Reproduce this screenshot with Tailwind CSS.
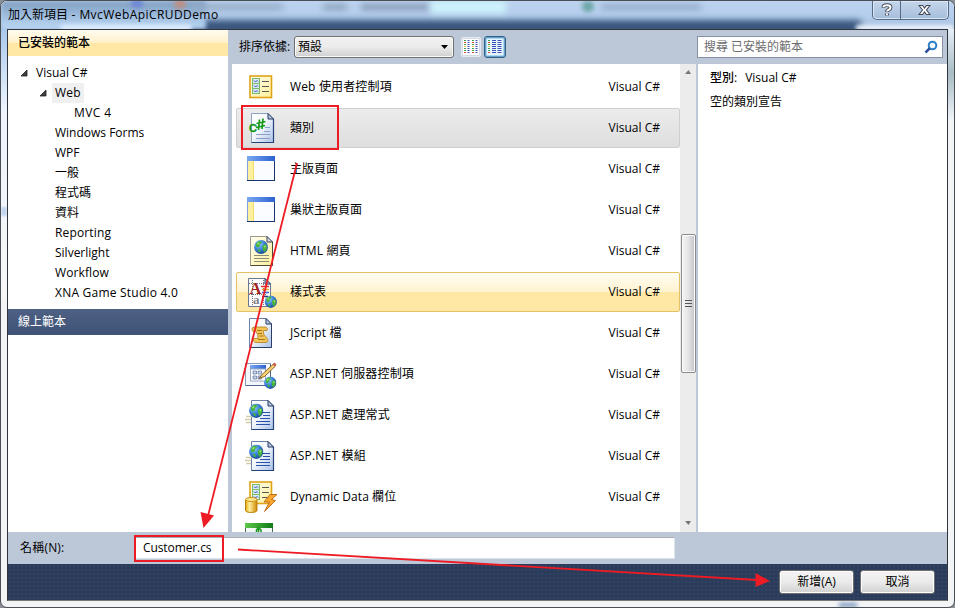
<!DOCTYPE html>
<html lang="zh-Hant">
<head>
  <meta charset="UTF-8">
  <meta name="viewport" content="width=device-width, initial-scale=1.0">
  <title>加入新項目 - MvcWebApiCRUDDemo</title>
  <script src="https://cdn.jsdelivr.net/npm/@tailwindcss/browser@4"></script>
</head>
<body class="w-[955px] h-[608px] overflow-hidden bg-[#8a8f96] font-['Open_Sans','Noto_Sans_CJK_TC',sans-serif] text-[12px] leading-[20px] text-black">

  <!-- icon sprites -->
  <svg width="0" height="0" class="absolute">
    <defs>
      <linearGradient id="paper" x1="0" y1="0" x2="1" y2="1"><stop offset="0" stop-color="#fff"/><stop offset=".45" stop-color="#f4f8fd"/><stop offset="1" stop-color="#a9bfe6"/></linearGradient>
      <linearGradient id="yellowPaper" x1="0" y1="0" x2="1" y2="1"><stop offset="0" stop-color="#fffef0"/><stop offset="1" stop-color="#ffef9a"/></linearGradient>
      <linearGradient id="blueBar" x1="0" y1="0" x2="1" y2="0"><stop offset="0" stop-color="#7aa8f2"/><stop offset="1" stop-color="#2c62d0"/></linearGradient>
      <linearGradient id="gold" x1="0" y1="0" x2="1" y2="0"><stop offset="0" stop-color="#e9a800"/><stop offset=".35" stop-color="#fff0a0"/><stop offset="1" stop-color="#d08a00"/></linearGradient>
      <linearGradient id="greenBar" x1="0" y1="0" x2="1" y2="0"><stop offset="0" stop-color="#5fc84a"/><stop offset="1" stop-color="#0f7a14"/></linearGradient>
      <radialGradient id="sea" cx=".35" cy=".3" r=".8"><stop offset="0" stop-color="#8fd0ff"/><stop offset=".5" stop-color="#3a7fd6"/><stop offset="1" stop-color="#12408f"/></radialGradient>

      <symbol id="globe" viewBox="0 0 14 14">
        <circle cx="7" cy="7" r="6.900" fill="url(#sea)"/>
        <path d="M2 3.500 4.500 1.200 8 1.500 7 3.500 5.500 4.500 6 6 4 7.500 2 6.500zM8.500 6 11 4l2 2-.5 3.500-2 2.800L8.800 10zM3.500 9 6 9.500 6.500 12 5 12z" fill="#46b43c"/>
        <path d="M3 3.500 5 2.200 5.500 3.300 3.800 5zM10 6l1.500-.8.5 1.500-1.200 1z" fill="#a8e07a"/>
      </symbol>
      <symbol id="form" viewBox="0 0 24 24">
        <rect x="1" y="1" width="21.500" height="21.500" fill="url(#yellowPaper)" stroke="#dfa416" stroke-width="1.600"/>
        <g fill="#dce8fb" stroke="#7dbb62" stroke-width="1"><rect x="3.500" y="3.500" width="7" height="5"/><rect x="3.500" y="8.500" width="7" height="5"/><rect x="3.500" y="13.500" width="7" height="5"/></g>
        <path d="M5 5.500 6.500 7 8 5.500 9 6.500M5 10.500 6.500 12 8 10.500 9 11.500M5 15.500 6.500 17 8 15.500 9 16.500" fill="none" stroke="#2e55a8"/>
        <path d="M13 6.500h7M13 11.500h7M13 16.500h7" stroke="#575a52"/>
      </symbol>
      <symbol id="i-form" viewBox="0 0 32 32"><use href="#form" x="4" y="4" width="24" height="24"/></symbol>
      <symbol id="i-class" viewBox="0 0 32 32">
        <path d="M6.500 1.500H23L28.500 7V30.500H6.500z" fill="url(#paper)" stroke="#8fa3c2"/>
        <path d="M6.500 30.500h22V7" fill="none" stroke="#24427c" stroke-width="1.200"/>
        <path d="M23 1.500V7h5.500z" fill="#b9cae6" stroke="#24385e"/>
        <path d="M20 15.500h5M19 19.500h6M11 22.500h14M11 26.500h14" stroke="#8c9fc6"/>
        <text x="4" y="20" font-family="Liberation Sans" font-weight="700" font-size="11" fill="#159a1c" stroke="#159a1c" stroke-width=".4">C</text>
        <path d="M14.500 7.500 13.500 18M18 6.500 17 17M11.500 11.500 20.500 9.500M11 15.500 20 13.500" stroke="#159a1c" stroke-width="1.700"/>
      </symbol>
      <symbol id="i-master" viewBox="0 0 32 32">
        <rect x="2.500" y="3.500" width="27" height="24" fill="#fbfcff" stroke="#16366f"/>
        <path d="M2.500 27V3.500" stroke="#7fa2d8"/>
        <rect x="2" y="3" width="28" height="5" fill="url(#blueBar)"/>
        <rect x="3" y="8" width="5" height="19" fill="#fff0a0"/><path d="M8.500 8v19" stroke="#f7dc6a"/>
      </symbol>
      <symbol id="i-html" viewBox="0 0 32 32">
        <path d="M5.500 1.500H22L27.500 7V30.500H5.500z" fill="url(#yellowPaper)" stroke="#9a9a8a"/>
        <path d="M5.500 30.500h22V7" fill="none" stroke="#4a4a38"/>
        <path d="M22 1.500V7h5.500z" fill="#d8dce8" stroke="#3a4258"/>
        <use href="#globe" x="9" y="5" width="14" height="14"/>
        <path d="M9 20.500h15M9 23.500h15M9 26.500h15" stroke="#8c8f78"/>
      </symbol>
      <symbol id="i-style" viewBox="0 0 32 32">
        <path d="M3.500 2.500H20L25.500 8V30.500H3.500z" fill="#fdfdff" stroke="#6c7892"/>
        <path d="M20 2.500V8h5.500z" fill="#c4d2ea" stroke="#24385e"/>
        <path d="M7.500 4v26M18.500 4v26M4 7.500h16M4 18.500h18" stroke="#777" stroke-dasharray="1 1"/>
        <path d="M16 10.500h8" stroke="#e23222" stroke-width="1.500"/><path d="M17 13.500h7" stroke="#f0a020" stroke-width="1.500"/><path d="M17 16.500h7" stroke="#2f62c8" stroke-width="1.500"/><path d="M17 20.500h6" stroke="#2a3a78" stroke-width="1.500"/>
        <text x="4.500" y="17.500" font-family="Liberation Serif" font-weight="700" font-size="16.500" fill="#a11f1c">A</text>
        <text x="8" y="27.500" font-family="Liberation Serif" font-weight="700" font-size="13" fill="#85858c">a</text>
        <use href="#globe" x="19.500" y="19.500" width="12.500" height="12.500"/>
      </symbol>
      <symbol id="i-jscript" viewBox="0 0 32 32">
        <path d="M4.500 1.500H21L26.500 7V30.500H4.500z" fill="url(#paper)" stroke="#6a80a8"/>
        <path d="M4.500 30.500h22V7" fill="none" stroke="#2c3e66"/>
        <path d="M21 1.500V7h5.500z" fill="#b9cae6" stroke="#24385e"/>
        <path d="M7 13Q6.500 10 9.500 10H20Q23.500 10.500 22 13.500H18.500Q17.500 17.500 21.500 20.500 24.500 24.500 21 25.500H11Q7.500 25 8.500 21.500H13Q13.500 17.500 11 14.500H8Z" fill="#f3c557" stroke="#b8862a" stroke-width=".9"/>
        <path d="M12 13.500h5M13 16.500h4M14.500 19h4M13 22.500h7" stroke="#9a6c1a" stroke-width=".9"/>
      </symbol>
      <symbol id="i-control" viewBox="0 0 32 32">
        <rect x=".5" y="5.500" width="25" height="22" fill="#f4f7fd" stroke="#8899b4"/>
        <path d="M1 27.500h24.500V6" fill="none" stroke="#51648c"/>
        <rect x="5" y="7" width="16" height="4" fill="url(#blueBar)"/><rect x="5.500" y="11" width="15" height="12" fill="#fff" stroke="#9aa8c4"/>
        <path d="M8 13h3.500v3H8zM13 13h3.500v3H13zM8 18h3.500v3H8zM13 18h3.500v3H13z" fill="#c4d3ee" stroke="#60749e" stroke-width=".7"/>
        <path d="M14 20.500 17.500 16 28.500 6l2 2-11 10.500z" fill="#f6d272" stroke="#7a5416" stroke-width=".9"/>
        <path d="M27.500 6.500 29.500 4.500 31.500 6.500 30 8.500z" fill="#c95b4d"/>
        <use href="#globe" x="19" y="18.500" width="12.500" height="12.500"/>
      </symbol>
      <symbol id="i-handler" viewBox="0 0 32 32">
        <path d="M6.500 1.500H23L28.500 7V30.500H6.500z" fill="url(#paper)" stroke="#6a80a8"/>
        <path d="M6.500 30.500h22V7" fill="none" stroke="#24427c" stroke-width="1.200"/>
        <path d="M23 1.500V7h5.500z" fill="#b9cae6" stroke="#24385e"/>
        <path d="M18 13.500h7M18 16.500h7M15 19.500h10M11 22.500h14M11 25.500h14" stroke="#2a52a8"/>
        <path d="M1 17.500h7M0 20.500h6M1 23.500h5" stroke="#cfcdaa" stroke-width="1.500"/>
        <use href="#globe" x="4" y="4.500" width="14.500" height="14.500"/>
      </symbol>
      <symbol id="i-dynamic" viewBox="0 0 32 32">
        <use href="#form" x="4" y="0" width="24" height="24"/>
        <path d="M.5 18.500v11q0 2 5.700 2t5.800-2v-11z" fill="url(#gold)" stroke="#b8800e"/>
        <ellipse cx="6.250" cy="18.500" rx="5.750" ry="2" fill="#ffe68a" stroke="#c8921c"/>
        <path d="M32 13.500 25 13.500 19 21 24.500 21 19.500 30.500 30.500 19.500 26.500 18.500z" fill="#f9a72e" stroke="#b96410" stroke-width=".9"/>
      </symbol>
      <symbol id="i-green" viewBox="0 0 32 32">
        <rect x=".5" y="1.500" width="27" height="26" fill="#f4f8f4" stroke="#4a6a58"/>
        <rect x="0" y="1" width="28" height="5" fill="url(#greenBar)"/>
        <path d="M11.500 10V8L13.500 5.500 16 8V10M13.500 5v5" stroke="#1f9a22" stroke-width="1.600" fill="none"/>
      </symbol>
    </defs>
  </svg>

  <div class="relative w-[955px] h-[608px] flex flex-col rounded-[7px] overflow-hidden border border-[#4a4e55] bg-[#f3f4f6] pl-[6px] pr-[6px] pb-[6px]">

    <!-- glass reflections behind the frame -->
    <div class="absolute left-0 top-0 w-[953px] h-[28px] overflow-hidden bg-linear-to-b from-[#bdd3ef] via-[#b3cdec] via-60% to-[#a2bad8]">
      <div class="absolute left-[190px] top-[19px] w-[670px] h-[16px] bg-[#3a567e] blur-[3px]"></div>
      <div class="absolute left-0 top-0 w-[205px] h-[28px] bg-linear-to-b from-[#809dc0] via-[#9dbbdd] to-[#bdd9f6] blur-[2px]"></div>
      <div class="absolute left-[60px] top-[24px] w-[130px] h-[6px] bg-[#e2efff] blur-[2px]"></div>
      <div class="absolute left-[130px] top-[-2px] w-[12px] h-[9px] rounded-full bg-[#6f88d6] blur-[2px]"></div>
      <div class="absolute left-[173px] top-[-2px] w-[12px] h-[10px] rounded-full bg-[#bb8f86] blur-[2px]"></div>
      <div class="absolute left-[192px] top-[3px] w-[90px] h-[6px] bg-[#93a9c6] blur-[3px]"></div>
      <div class="absolute left-[322px] top-[3px] w-[24px] h-[6px] bg-[#8ba0bb] blur-[3px]"></div>
      <div class="absolute left-[360px] top-[3px] w-[68px] h-[6px] bg-[#8599b5] blur-[3px]"></div>
      <div class="absolute left-[430px] top-0 w-[75px] h-[12px] bg-[#cdf3fc] blur-[3px]"></div>
      <div class="absolute left-[581px] top-0 w-[12px] h-[11px] rounded-full bg-[#6fa8a8] blur-[2px]"></div>
      <div class="absolute left-[600px] top-[3px] w-[100px] h-[6px] bg-[#94accb] blur-[3px]"></div>
      <div class="absolute left-[855px] top-[24px] w-[98px] h-[6px] bg-[#eef5ff] blur-[2px]"></div>
    </div>
    <div class="absolute left-0 top-[28px] w-[6px] h-[270px] bg-linear-to-b from-[#a9c8ec] via-[#eef5fc] via-30% to-[#f6f6f7]"></div>
    <div class="absolute left-0 top-[206px] w-[6px] h-[9px] bg-[#c2d5ee] blur-[1px]"></div>
    <div class="absolute left-[947px] top-[28px] w-[6px] h-[90px] bg-linear-to-b from-[#e6eef7] via-[#a9bdc4] to-[#eef3f8]"></div>
    <div class="absolute left-[838px] top-[602px] w-[18px] h-[4px] bg-[#6f90b8] blur-[2px]"></div>

    <!-- title bar -->
    <div class="relative h-[28px] shrink-0 flex justify-between">
      <h1 class="pl-px pt-[4px] whitespace-nowrap">加入新項目<span class="tracking-[0.43px]"> - MvcWebApiCRUDDemo</span></h1>
      <div class="flex h-[19px] mr-[-1px] border border-t-0 border-[#566985] rounded-b-[5px] bg-linear-to-b from-[#c5d6eb] to-[#a5bddb] shadow-[inset_0_0_0_1px_#d8e6f6]">
        <button class="w-[28px] border-r border-[#566985] flex items-center justify-center">
          <svg width="12" height="14" viewBox="0 0 12 14"><path d="M2.500 4.800V4Q2.500 2.200 6 2.200T9.500 4.500Q9.500 6 7.800 6.800 6 7.500 6 9M6 10.500v2" fill="none" stroke="#444b58" stroke-width="3.800"/><path d="M2.500 4.300V4Q2.500 2.200 6 2.200T9.500 4.500Q9.500 6 7.800 6.800 6 7.500 6 8.500M6 10.600v1.600" fill="none" stroke="#fff" stroke-width="2"/></svg>
        </button>
        <button class="w-[47px] flex items-center justify-center">
          <svg width="13" height="12" viewBox="0 0 13 12"><path d="M1 1.500h3.600L6.500 4l1.900-2.500H12L8.500 6l3.500 4.500H8.400L6.500 8l-1.900 2.500H1L4.500 6z" fill="#fff" stroke="#444b58" stroke-width="1.100"/></svg>
        </button>
      </div>
    </div>

    <div class="relative h-[572px] w-[941px] flex flex-col border border-[#30353d] border-b-[#777] bg-[#bcc7d8]">
      <div class="flex h-[502px]">

        <!-- template tree -->
        <aside class="w-[220px] bg-white">
          <h2 class="h-[26px] pl-[10px] leading-[25px] font-medium bg-linear-to-b from-[#fffcf0] from-0% via-[#fff1c8] via-50% to-[#ffe8a6] to-51%">已安裝的範本</h2>
          <ul class="h-[253px] pt-[7px]">
            <li class="flex items-center pl-[12px] gap-[8px]"><svg width="8" height="8"><path d="M7 1v6H1z" fill="#404040" stroke="#222" stroke-width=".8"/></svg>Visual C#</li>
            <li class="flex items-center pl-[31px] gap-[5px]"><svg width="8" height="8"><path d="M7 1v6H1z" fill="#404040" stroke="#222" stroke-width=".8"/></svg><span class="bg-[#f0f0f0] px-[3px] tracking-[0.2px]">Web</span></li>
            <li class="pl-[66px] tracking-[0.4px]">MVC 4</li>
            <li class="pl-[47px]">Windows Forms</li>
            <li class="pl-[47px]">WPF</li>
            <li class="pl-[47px]">一般</li>
            <li class="pl-[47px]">程式碼</li>
            <li class="pl-[47px]">資料</li>
            <li class="pl-[47px] tracking-[0.15px]">Reporting</li>
            <li class="pl-[47px]">Silverlight</li>
            <li class="pl-[47px] tracking-[0.1px]">Workflow</li>
            <li class="pl-[47px] tracking-[0.22px]">XNA Game Studio 4.0</li>
          </ul>
          <h2 class="h-[26px] pl-[10px] leading-[25px] text-white bg-linear-to-b from-[#4e6184] to-[#3e5277]">線上範本</h2>
        </aside>

        <div class="flex-1 flex flex-col">
          <!-- toolbar -->
          <div class="h-[34px] flex items-center pl-[11px] pr-[4px]">
            <span class="w-[55px] whitespace-nowrap">排序依據:</span>
            <div class="w-[160px] h-[22px] flex items-center justify-between pl-[3px] pr-[5px] border border-[#707070] rounded-[3px] bg-linear-to-b from-[#f2f2f2] from-0% via-[#ebebeb] via-50% to-[#cfcfcf] shadow-[inset_0_0_0_1px_#fafafa]">
              <span>預設</span>
              <svg width="7" height="4"><path d="M0 0h7L3.500 4z"/></svg>
            </div>
            <button class="ml-[7px] w-[20px] h-[20px] flex items-center justify-center rounded-[2px] border border-[#e6eaf2] bg-[#d4dbe7]">
              <svg width="16" height="16" viewBox="0 0 16 16"><rect width="16" height="16" fill="#fff"/>
                <path d="M2 1v14M10 1v14" stroke="#3ba45a" stroke-width="2" stroke-dasharray="1 1"/><path d="M2 3v2M10 3v2M2 13v2M10 13v2" stroke="#d8433a" stroke-width="2" stroke-dasharray="1 1"/><path d="M2 7v2M10 7v2" stroke="#e8c040" stroke-width="2" stroke-dasharray="1 1"/><path d="M5.500 1v14M13.500 1v14" stroke="#3c50b8" stroke-width="2" stroke-dasharray="1 1"/></svg>
            </button>
            <button class="ml-[3px] w-[22px] h-[22px] flex items-center justify-center rounded-[3px] border border-[#2c628b] bg-[#a9d9f2] shadow-[inset_0_0_0_1px_#6a9fc2]">
              <svg width="16" height="16" viewBox="0 0 16 16"><rect width="16" height="16" fill="#e8f4fc"/>
                <path d="M2 1v14" stroke="#3ba45a" stroke-width="2" stroke-dasharray="1 1"/><path d="M2 3v2M2 13v2" stroke="#d8433a" stroke-width="2" stroke-dasharray="1 1"/><path d="M2 7v2" stroke="#e8c040" stroke-width="2" stroke-dasharray="1 1"/><path d="M7 1v14M12.500 1v14" stroke="#3c50b8" stroke-width="4" stroke-dasharray="1 1"/></svg>
            </button>
            <div class="ml-auto w-[246px] h-[22px] flex items-center justify-between pl-[6px] pr-[4px] border border-[#8591a2] bg-white text-[#6d6d6d]">
              <span>搜尋 已安裝的範本</span>
              <svg width="14" height="14" viewBox="0 0 14 14"><circle cx="8.500" cy="5.500" r="3.800" fill="#f2f9ff" stroke="#2b7fc8" stroke-width="2"/><path d="M5.800 8.200 1.500 12.500" stroke="#2b4f98" stroke-width="2.500"/></svg>
            </div>
          </div>

          <div class="h-[468px] flex">
            <!-- item list -->
            <ul class="ml-[4px] w-[448px] h-[468px] pt-[3px] pl-[4px] bg-white overflow-hidden [&>li]:w-[444px] [&>li]:h-[40px] [&>li]:mb-px [&>li]:flex [&>li]:items-center [&>li]:border [&>li]:border-transparent [&>li]:rounded-[2px] [&>li]:pl-[8px] [&>li]:pr-[19px] [&_svg]:size-[32px] [&_svg]:mr-[13px] [&_b]:ml-auto [&_b]:font-normal">
              <li><svg><use href="#i-form"/></svg><span class="tracking-[0.15px]">Web 使用者控制項</span><b>Visual C#</b></li>
              <li class="border-[#cfcfcf]! bg-linear-to-b from-[#ececec] to-[#dedede]"><svg><use href="#i-class"/></svg>類別<b>Visual C#</b></li>
              <li><svg><use href="#i-master"/></svg>主版頁面<b>Visual C#</b></li>
              <li><svg><use href="#i-master"/></svg>巢狀主版頁面<b>Visual C#</b></li>
              <li><svg><use href="#i-html"/></svg><span class="tracking-[0.15px]">HTML 網頁</span><b>Visual C#</b></li>
              <li class="border-[#e5c365]! bg-linear-to-b from-[#fffcf2] from-0% via-[#fff3cf] via-50% to-[#ffe8a6] to-51%"><svg><use href="#i-style"/></svg>樣式表<b>Visual C#</b></li>
              <li><svg><use href="#i-jscript"/></svg><span class="tracking-[0.15px]">JScript 檔</span><b>Visual C#</b></li>
              <li><svg><use href="#i-control"/></svg><span class="tracking-[0.14px]">ASP.NET 伺服器控制項</span><b>Visual C#</b></li>
              <li><svg><use href="#i-handler"/></svg><span class="tracking-[0.16px]">ASP.NET 處理常式</span><b>Visual C#</b></li>
              <li><svg><use href="#i-handler"/></svg><span class="tracking-[0.2px]">ASP.NET 模組</span><b>Visual C#</b></li>
              <li><svg><use href="#i-dynamic"/></svg><span class="tracking-[0.07px]">Dynamic Data 欄位</span><b>Visual C#</b></li>
              <li><svg><use href="#i-green"/></svg></li>
            </ul>

            <!-- scrollbar -->
            <div class="w-[16px] flex flex-col items-center bg-[#ececec]">
              <svg width="6" height="4" class="mt-[6px]"><path d="M0 4h6L3.500 0z" fill="#777"/></svg>
              <div class="mt-[160px] w-[15px] h-[139px] pb-px flex flex-col items-center justify-center gap-[2px] border border-[#8b8b8b] rounded-[2px] bg-linear-to-r from-[#f5f5f5] via-[#e6e6e9] via-45% to-[#c3c3c8] shadow-[inset_0_0_0_1px_#fafafa]">
                <i class="w-[7px] h-px bg-[#555]"></i><i class="w-[7px] h-px bg-[#555]"></i><i class="w-[7px] h-px bg-[#555]"></i>
              </div>
              <svg width="6" height="4" class="mt-auto mb-[7px]"><path d="M0 0h6L3.500 4z" fill="#777"/></svg>
            </div>

            <!-- details -->
            <section class="w-[251px] border-l-2 border-[#bcc7d8] bg-white pl-[12px] pt-[2px] leading-[24px]">
              <div><span class="font-medium mr-[8px]">型別:</span>Visual C#</div>
              <div>空的類別宣告</div>
            </section>
          </div>
        </div>
      </div>

      <!-- file name -->
      <div class="h-[32px] flex items-start pl-[12px] pt-[5px]">
        <label class="w-[114px] leading-[22px] tracking-[0.2px]">名稱(N):</label>
        <div class="w-[541px] h-[22px] pl-[8px] leading-[19px] tracking-[-0.1px] border border-[#dce3ed] border-t-[#abadb3] bg-white">Customer.cs</div>
      </div>

      <!-- footer buttons -->
      <div class="h-[36px] flex justify-end gap-[6px] pt-[6px] pr-[12px] bg-[#2b3b59] bg-[radial-gradient(#33476a_0.6px,transparent_1px)] bg-size-[4px_4px]">
        <button class="w-[75px] h-[24px] border border-[#707070] rounded-[3px] bg-linear-to-b from-[#f3f3f3] from-0% via-[#ebebeb] via-50% to-[#d0d0d0] shadow-[inset_0_0_0_1px_#fcfcfc]">新增(A)</button>
        <button class="w-[75px] h-[24px] border border-[#707070] rounded-[3px] bg-linear-to-b from-[#f3f3f3] from-0% via-[#ebebeb] via-50% to-[#d0d0d0] shadow-[inset_0_0_0_1px_#fcfcfc]">取消</button>
      </div>
    </div>
  </div>

  <!-- red annotations -->
  <svg class="absolute left-0 top-0" width="955" height="608" viewBox="0 0 955 608" fill="none" stroke="#ed1c24">
    <rect x="242" y="106" width="96" height="43" stroke-width="2"/>
    <rect x="135" y="536" width="88" height="25" stroke-width="2"/>
    <path d="M297 163 208 516" stroke-width="1.800"/>
    <path d="M200.500 512 214 515.500 203.500 528z" fill="#ed1c24" stroke="none"/>
    <path d="M238 549.500 757 580" stroke-width="1.800"/>
    <path d="M755.500 573V587L770 581z" fill="#ed1c24" stroke="none"/>
  </svg>
</body>
</html>
